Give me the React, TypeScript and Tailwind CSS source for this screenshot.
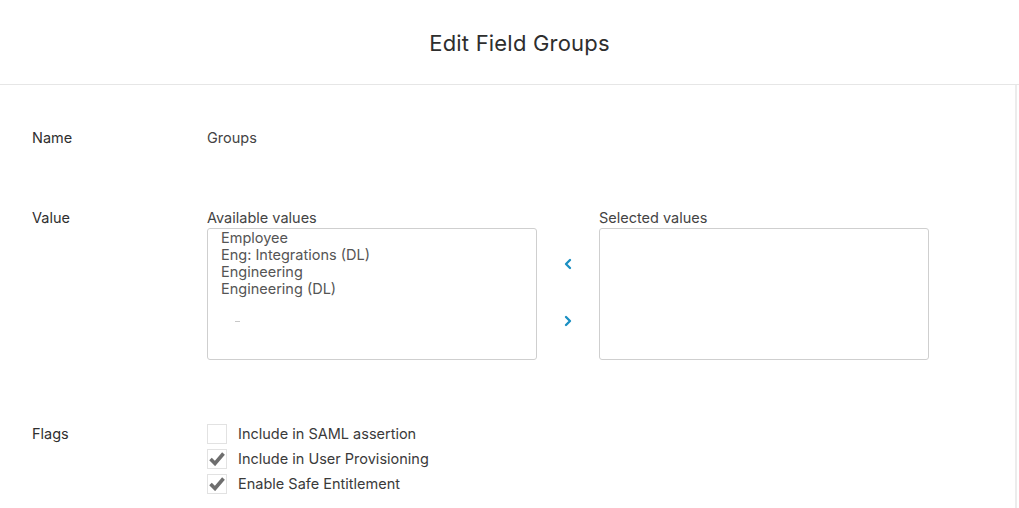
import { ChevronLeft, ChevronRight } from 'lucide-react';

const available = ['Employee', 'Eng: Integrations (DL)', 'Engineering', 'Engineering (DL)'];

const flags = [
  { label: 'Include in SAML assertion', checked: false },
  { label: 'Include in User Provisioning', checked: true },
  { label: 'Enable Safe Entitlement', checked: true },
];

function Check({ checked }: { checked: boolean }) {
  return (
    <div className="w-5 h-5 border border-[#e2e2e2] bg-white flex items-center justify-center">
      {checked && (
        <svg width="16" height="14" viewBox="0 0 16 14">
          <path d="M1.5 7 L6 11.5 L14.5 1.5" fill="none" stroke="#6e6e6e" strokeWidth="3.6" strokeLinejoin="miter" />
        </svg>
      )}
    </div>
  );
}

export default function App() {
  return (
    <div className="w-[1019px] h-[508px] bg-white overflow-hidden text-[#333] font-['Inter',sans-serif]">
      <header className="h-[85px] border-b border-[#e6e6e6] flex items-center justify-center pl-5">
        <h1 className="text-[22px] text-[#2e2e2e] tracking-[0.2px] pt-[3px]">Edit Field Groups</h1>
      </header>

      <div className="w-[1017px] h-[423px] border-r-2 border-[#ececec] pl-8 pt-[43px] text-[14.5px]">
        <div className="flex items-center h-5">
          <div className="w-[175px] text-[#2f2f2f]">Name</div>
          <div className="text-[#444]">Groups</div>
        </div>

        <div className="flex mt-[60px]">
          <div className="w-[175px] text-[#2f2f2f] leading-5">Value</div>
          <div className="flex">
            <div>
              <div className="leading-5 text-[#444]">Available values</div>
              <div className="w-[330px] h-[132px] border border-[#cfcfcf] rounded-[3px] pl-[13px] text-[#555] leading-[17px]">
                {available.map((v) => (
                  <div key={v}>{v}</div>
                ))}
                <div className="ml-[14px] mt-[24px] w-[5px] h-px bg-[#c8c8c8]" />
              </div>
            </div>
            <div className="w-[62px] flex flex-col items-center pt-[48px] gap-[41px] text-[#1a8fc2]">
              <ChevronLeft size={16} strokeWidth={3.5} />
              <ChevronRight size={16} strokeWidth={3.5} />
            </div>
            <div>
              <div className="leading-5 text-[#444]">Selected values</div>
              <div className="w-[330px] h-[132px] border border-[#cfcfcf] rounded-[3px]" />
            </div>
          </div>
        </div>

        <div className="flex mt-[64px]">
          <div className="w-[175px] text-[#2f2f2f] leading-5">Flags</div>
          <div className="flex flex-col gap-[5px]">
            {flags.map((f) => (
              <div key={f.label} className="flex items-center gap-[11px] h-5">
                <Check checked={f.checked} />
                <span className="text-[#3a3a3a]">{f.label}</span>
              </div>
            ))}
          </div>
        </div>
      </div>
    </div>
  );
}
